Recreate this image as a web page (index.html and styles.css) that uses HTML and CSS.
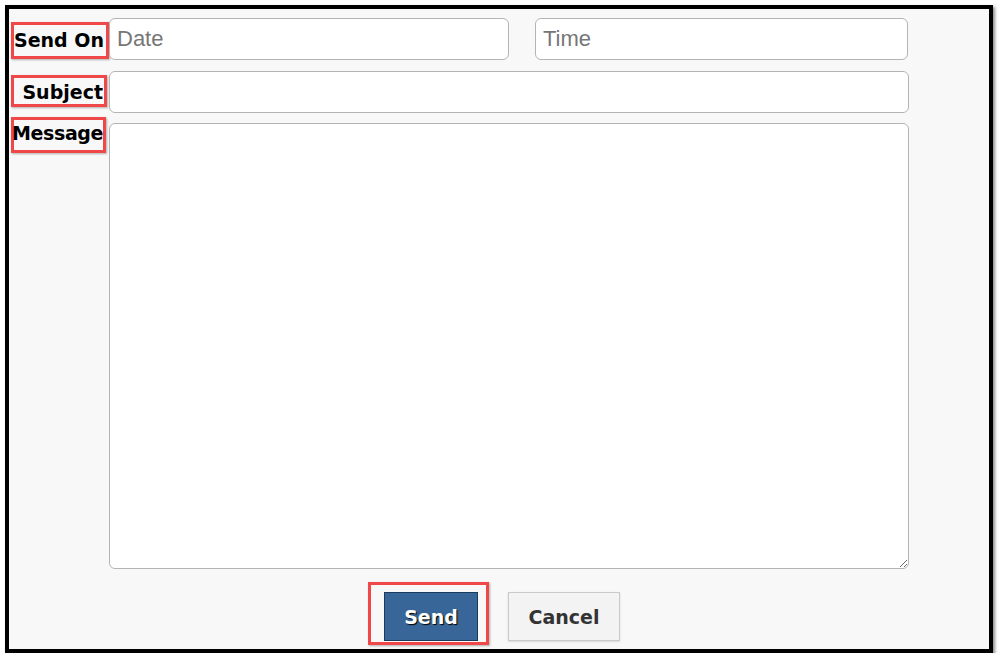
FILE: index.html
```html
<!DOCTYPE html>
<html lang="en">

<head>
    <meta charset="UTF-8">
    <title>Send Message</title>
    <link rel="stylesheet" href="styles.css">
</head>

<body>
    <div class="frame">
        <form class="form">
            <div class="row">
                <div class="cell"><label class="lbl lbl-on">Send On</label></div>
                <input class="field field-date" type="text" placeholder="Date">
                <input class="field field-time" type="text" placeholder="Time">
            </div>
            <div class="row row-subject">
                <div class="cell"><label class="lbl lbl-subject">Subject</label></div>
                <input class="field field-wide" type="text">
            </div>
            <div class="row row-message">
                <div class="cell"><label class="lbl lbl-message">Message</label></div>
                <textarea class="field area"></textarea>
            </div>
            <div class="actions">
                <span class="mark"><button class="btn btn-send" type="button">Send</button></span>
                <button class="btn btn-cancel" type="button">Cancel</button>
            </div>
        </form>
    </div>
</body>

</html>
```

FILE: styles.css
```css
body {
    margin: 0;
    background: #fff;
    font-family: "DejaVu Sans", Verdana, sans-serif;
}

.frame {
    box-sizing: border-box;
    width: 988px;
    height: 648px;
    margin: 5px 0 0 5px;
    padding: 9px 0 0 2px;
    border: 4px solid #000;
    background: #f8f8f8;
    box-shadow: 2px 2px 3px rgba(0, 0, 0, .45);
}

.row {
    display: flex;
    align-items: flex-start;
}

.row-subject {
    margin-top: 11px;
}

.row-message {
    margin-top: 10px;
}

.cell {
    flex: none;
    width: 98px;
}

/* red annotation boxes */
.lbl {
    display: block;
    box-sizing: border-box;
    border: 3px solid #f04848;
    box-shadow: 1px 1px 2px rgba(0, 0, 0, .3);
    font-size: 19px;
    font-weight: bold;
    color: #000;
    text-align: right;
    white-space: nowrap;
}

.lbl-on {
    width: 98px;
    height: 37px;
    margin-top: 4px;
    padding-right: 3px;
    line-height: 31px;
}

.lbl-subject {
    width: 96px;
    height: 32px;
    margin-top: 4px;
    padding-right: 1px;
    line-height: 28px;
}

.lbl-message {
    width: 95px;
    height: 36px;
    margin-top: -6px;
    padding: 0;
    line-height: 27px;
    letter-spacing: -0.4px;
    text-indent: -3px;
}

.field {
    box-sizing: border-box;
    height: 42px;
    padding: 0 7px;
    border: 1px solid #b4b4b4;
    border-radius: 6px;
    background: #fff;
    font-family: "Liberation Sans", Arial, sans-serif;
    font-size: 22px;
    color: #333;
    outline: none;
}

.field::placeholder {
    color: #767676;
}

.field-date {
    width: 400px;
}

.field-time {
    width: 373px;
    margin-left: 26px;
}

.field-wide {
    width: 800px;
}

.area {
    width: 800px;
    height: 446px;
    resize: both;
    padding: 7px;
}

.actions {
    display: flex;
    align-items: flex-start;
    margin: 13px 0 0 357px;
}

.mark {
    display: block;
    padding: 7px 8px 1px 13px;
    border: 3px solid #f04848;
    box-shadow: 1px 1px 2px rgba(0, 0, 0, .3);
}

.btn {
    display: block;
    box-sizing: border-box;
    height: 49px;
    margin: 0;
    font-family: "DejaVu Sans", Verdana, sans-serif;
    font-size: 19px;
    font-weight: bold;
    cursor: pointer;
}

.btn-send {
    width: 94px;
    border: 1px solid #1c3a5c;
    background: #386698;
    color: #fff;
    text-shadow: 1px 1px 1px #000;
}

.btn-cancel {
    width: 112px;
    margin: 10px 0 0 19px;
    border: 1px solid #cacaca;
    background: #f3f3f3;
    color: #333;
    box-shadow: 0 1px 2px rgba(0, 0, 0, .12);
}
```
